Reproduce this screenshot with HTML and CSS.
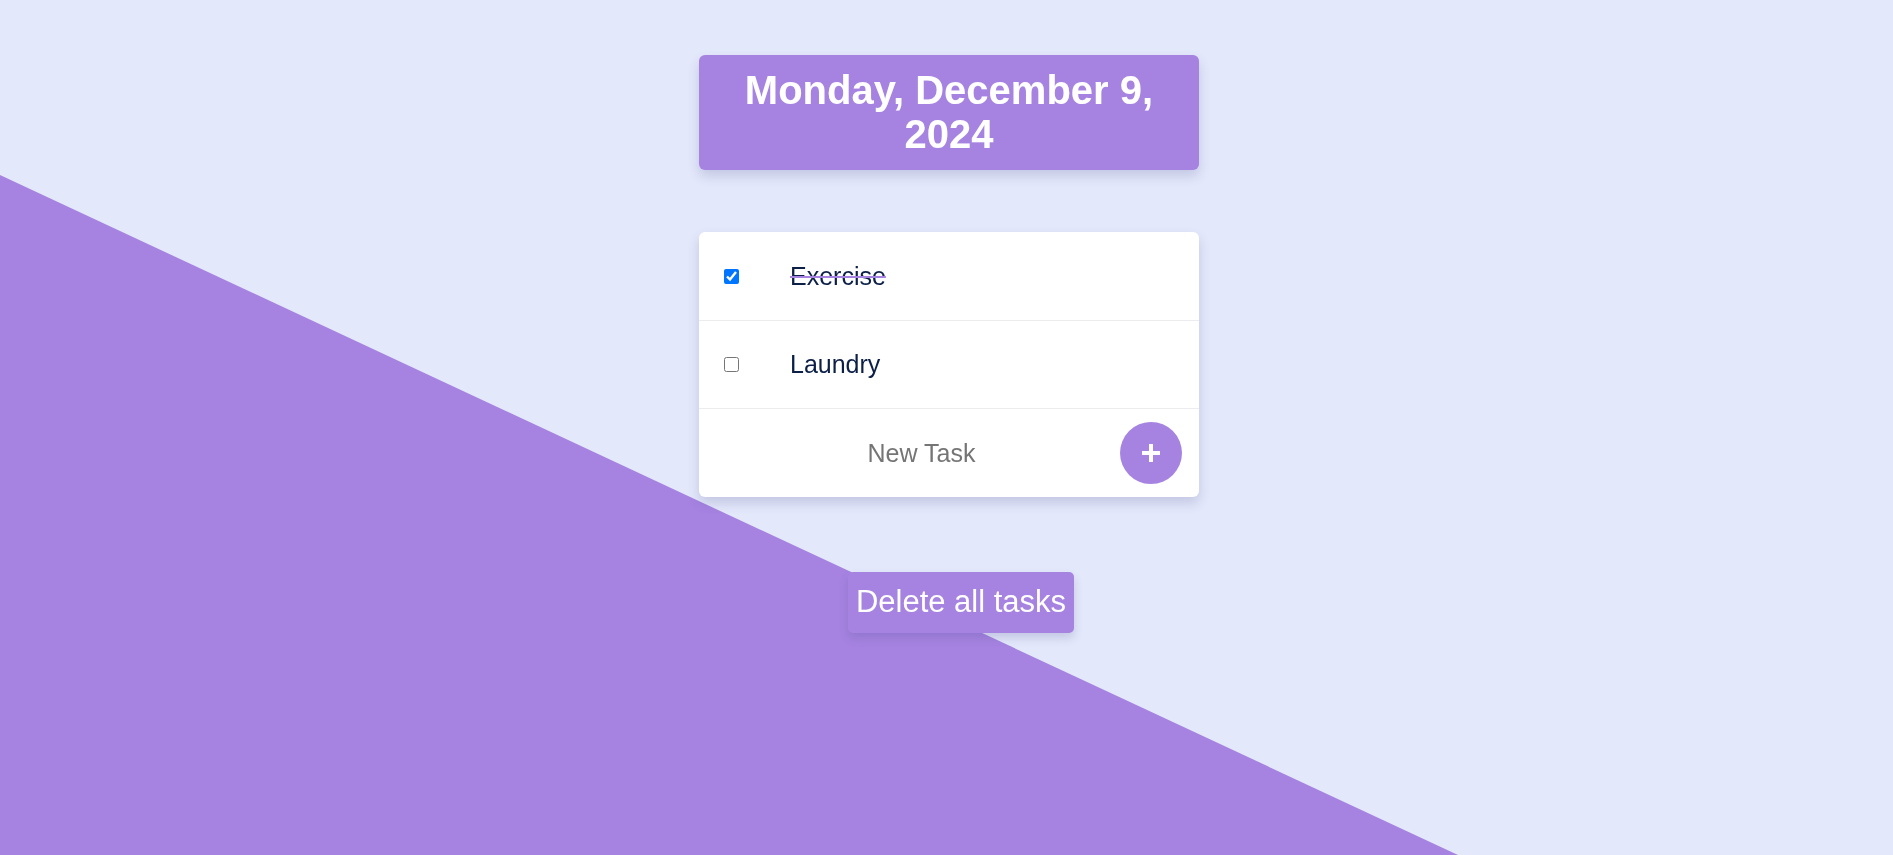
FILE: index.html
```html
<!DOCTYPE html>
<html lang="en">
<head>
<meta charset="utf-8">
<title>Todo</title>
<link rel="stylesheet" href="styles.css">
</head>
<body>
<div class="backdrop"></div>
<main class="app">
  <h1 class="date">Monday, December 9, 2024</h1>
  <section class="card">
    <div class="row">
      <input type="checkbox" class="check" checked>
      <span class="task done">Exercise</span>
    </div>
    <div class="row row-mid">
      <input type="checkbox" class="check">
      <span class="task">Laundry</span>
    </div>
    <div class="row new-row">
      <input type="text" class="new-input" placeholder="New Task">
      <button class="add-btn" aria-label="Add task">
        <svg width="20" height="20" viewBox="0 0 20 20"><path d="M10 1v18M1 10h18" stroke="#fff" stroke-width="4" stroke-linecap="butt"/></svg>
      </button>
    </div>
  </section>
  <button class="delete-btn">Delete all tasks</button>
</main>
</body>
</html>
```
FILE: styles.css
```css
html, body {
  margin: 0;
  padding: 0;
}
body {
  background: #e3e8fb;
  font-family: "Liberation Sans", Arial, sans-serif;
  min-height: 855px;
  overflow: hidden;
}
.backdrop {
  position: fixed;
  inset: 0;
  background: #a683e1;
  clip-path: polygon(0 175px, 1458px 855px, 0 855px);
  z-index: 0;
}
.app {
  position: relative;
  z-index: 1;
  display: flex;
  flex-direction: column;
  align-items: center;
  padding-left: 5px;
}
.date {
  box-sizing: border-box;
  width: 500px;
  margin: 55px 0 0;
  padding: 13px 20px 14px;
  background: #a683e1;
  color: #fff;
  border-radius: 6px;
  font-size: 40px;
  line-height: 44px;
  font-weight: bold;
  text-align: center;
  box-shadow: 0 6px 12px rgba(70, 70, 130, 0.2);
}
.card {
  width: 500px;
  margin-top: 62px;
  background: #fff;
  border-radius: 6px;
  box-shadow: 0 6px 12px rgba(70, 70, 130, 0.2);
  display: flex;
  flex-direction: column;
}
.row {
  height: 88px;
  display: flex;
  align-items: center;
  border-bottom: 1px solid #ececf0;
}
.row-mid {
  height: 87px;
}
.row:last-child {
  border-bottom: none;
}
.check {
  width: 15px;
  height: 15px;
  margin: 0 0 0 25px;
}
.task {
  margin-left: 51px;
  font-size: 25px;
  color: #0b1f47;
}
.task.done {
  text-decoration: line-through;
  text-decoration-color: #a683e1;
  text-decoration-thickness: 2px;
}
.new-row {
  padding: 0 17px 0 24px;
}
.new-input {
  flex: 1;
  min-width: 0;
  border: none;
  outline: none;
  background: transparent;
  font-family: "Liberation Sans", Arial, sans-serif;
  font-size: 25px;
  text-align: center;
  color: #0b1f47;
  padding: 0;
}
.new-input::placeholder {
  color: #757575;
}
.add-btn {
  width: 62px;
  height: 62px;
  border: none;
  border-radius: 50%;
  background: #a683e1;
  display: flex;
  align-items: center;
  justify-content: center;
  padding: 0;
  cursor: pointer;
}
.add-btn svg {
  width: 20px;
  height: 20px;
}
.delete-btn {
  margin: 75px 0 0 24px;
  padding: 12px 8px 13px;
  border: none;
  border-radius: 5px;
  background: #a683e1;
  color: #fff;
  font-family: "Liberation Sans", Arial, sans-serif;
  font-size: 31px;
  box-shadow: 0 5px 10px rgba(70, 70, 130, 0.2);
  cursor: pointer;
}
```
